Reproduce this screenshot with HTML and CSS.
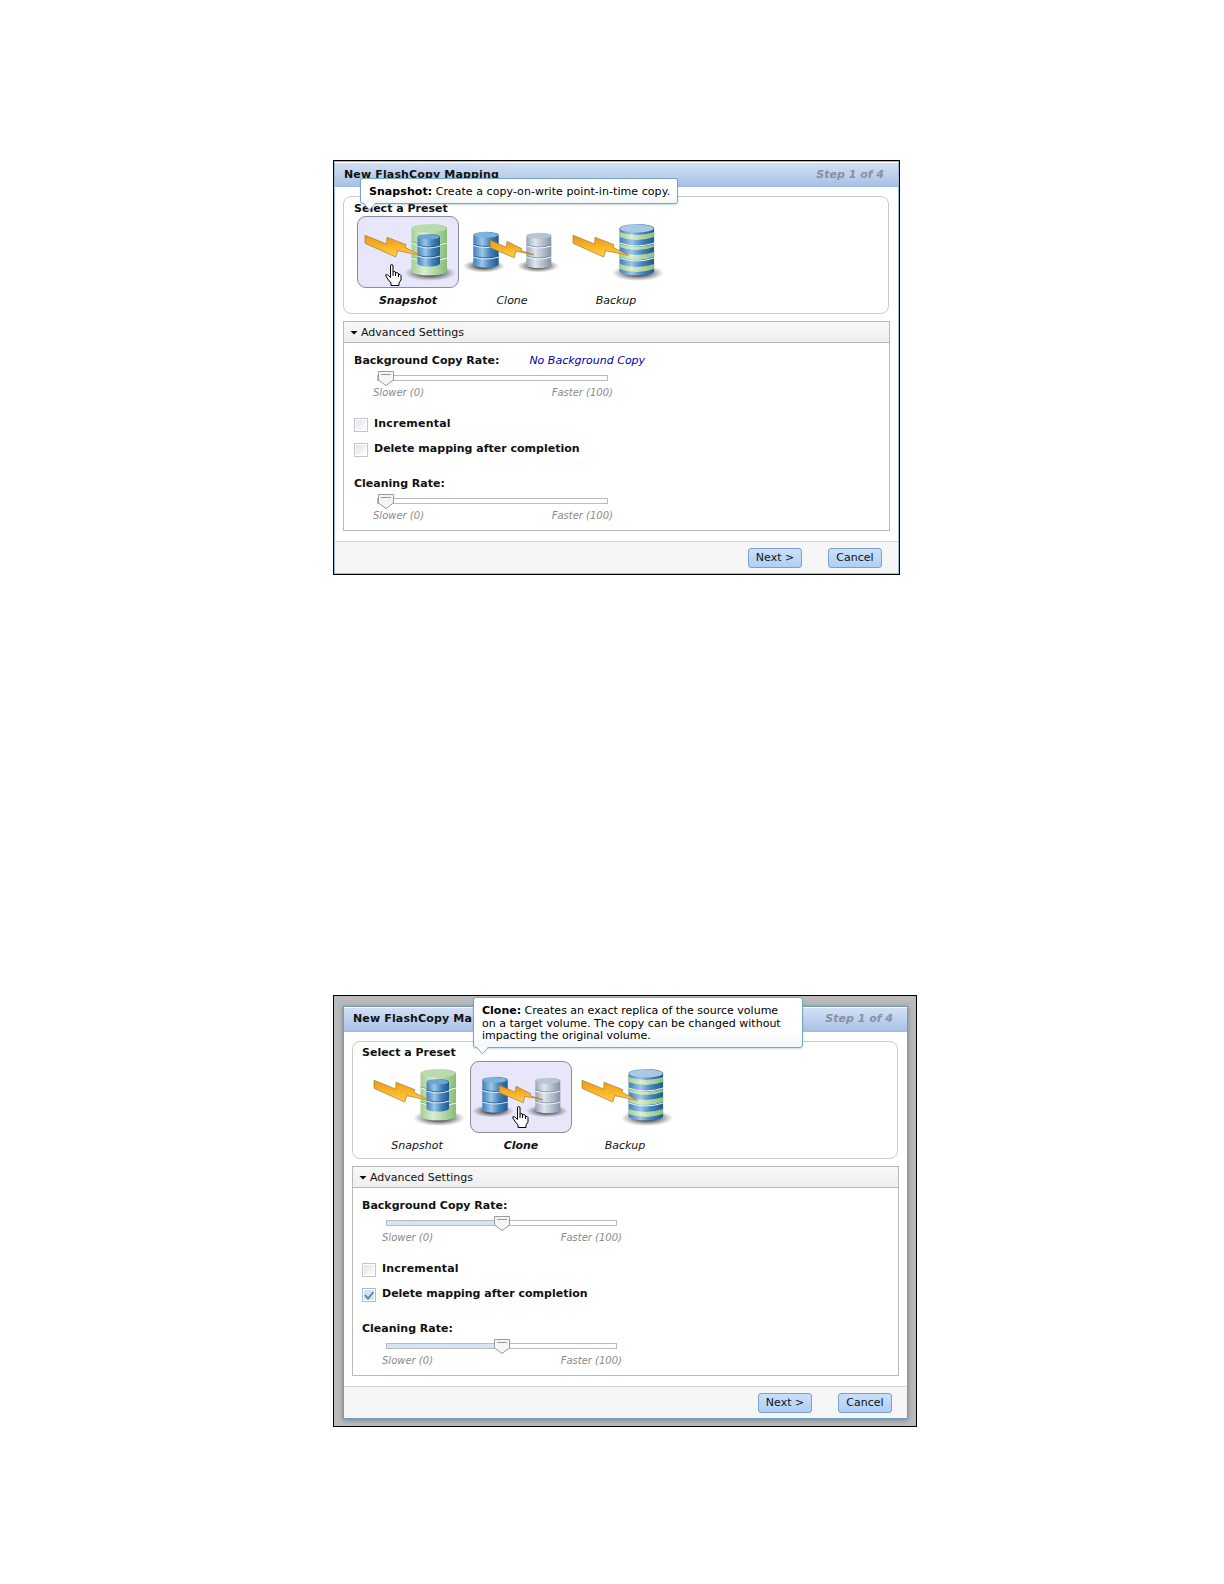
FILE: index.html
```html
<!DOCTYPE html>
<html lang="en">
<head>
	<meta charset="UTF-8">
	<title>New FlashCopy Mapping</title>
	<link rel="stylesheet" href="styles.css">
</head>
<body>
	<!-- shared drawings -->
	<svg class="defs" width="0" height="0">
		<defs>
			<linearGradient id="gGreen"><stop offset="0" stop-color="#a3cf92"/><stop offset=".35" stop-color="#daeecf"/><stop offset="1" stop-color="#86bd78"/></linearGradient>
			<linearGradient id="gBlue"><stop offset="0" stop-color="#3f7fb8"/><stop offset=".35" stop-color="#9cc6e8"/><stop offset=".65" stop-color="#4585bd"/><stop offset="1" stop-color="#22588f"/></linearGradient>
			<linearGradient id="gGrey"><stop offset="0" stop-color="#98a5b6"/><stop offset=".35" stop-color="#dfe5ec"/><stop offset="1" stop-color="#8593a8"/></linearGradient>
			<linearGradient id="gBolt" x2="0" y2="1"><stop offset="0" stop-color="#e8981c"/><stop offset=".6" stop-color="#fbb829"/><stop offset="1" stop-color="#ffd04a"/></linearGradient>
			<radialGradient id="gShade"><stop offset=".3" stop-color="#222" stop-opacity=".85"/><stop offset="1" stop-color="#555" stop-opacity="0"/></radialGradient>
			<symbol id="snapshot" viewBox="0 0 102 72">
				<ellipse cx="73" cy="57" rx="26" ry="8" fill="url(#gShade)"/>
				<path d="M54.500 12.500a17.700 4.500 0 0 1 35.500 0V55a17.700 4.500 0 0 1-35.500 0z" fill="url(#gGreen)"/>
				<ellipse cx="72.200" cy="12.500" rx="17" ry="4" fill="#b9dbae"/>
				<path d="M54.500 26q17.500 6 35.500 0M54.500 41q17.500 6 35.500 0" fill="none" stroke="#6fa965" stroke-width=".8"/>
				<path d="M54.500 27q17.500 6 35.500 0M54.500 42q17.500 6 35.500 0" fill="none" stroke="#f0f9ea"/>
				<path d="M60.500 21a11.200 3 0 0 1 22.500 0V47.500a11.200 3 0 0 1-22.500 0z" fill="url(#gBlue)"/>
				<ellipse cx="71.700" cy="21" rx="10.700" ry="2.600" fill="#6da5d2"/>
				<path d="M60.500 29q11 4 22.500 0M60.500 39q11 4 22.500 0" fill="none" stroke="#1f527f" stroke-width=".8"/>
				<path d="M60.500 30q11 4 22.500 0M60.500 40q11 4 22.500 0" fill="none" stroke="#dbeaf5"/>
				<path d="M8 19.300L29.700 28l.300-6.700 19 7.400-1 2.600 15.300 8-22.600-4.600-2 6.300L8 27.300z" fill="url(#gBolt)" stroke="#a8783a" stroke-width=".7"/>
			</symbol>
			<symbol id="clone" viewBox="0 0 102 72">
				<ellipse cx="23" cy="50" rx="21" ry="6.500" fill="url(#gShade)"/>
				<ellipse cx="77" cy="50" rx="21" ry="6.500" fill="url(#gShade)"/>
				<path d="M12.300 19a12.700 3.300 0 0 1 25.400 0V48.500a12.700 3.300 0 0 1-25.400 0z" fill="url(#gBlue)"/>
				<ellipse cx="25" cy="19" rx="12" ry="2.800" fill="#7fb1da"/>
				<path d="M12.300 28.500q12.700 4 25.400 0M12.300 40q12.700 4 25.400 0" fill="none" stroke="#1f527f" stroke-width=".8"/>
				<path d="M12.300 29.500q12.700 4 25.400 0M12.300 41q12.700 4 25.400 0" fill="none" stroke="#dbeaf5"/>
				<path d="M65.300 20a12.500 3.300 0 0 1 25 0V49a12.500 3.300 0 0 1-25 0z" fill="url(#gGrey)"/>
				<ellipse cx="77.800" cy="20" rx="12" ry="2.800" fill="#b9c4d2"/>
				<path d="M65.300 29q12.500 4 25 0M65.300 40q12.500 4 25 0" fill="none" stroke="#75859a" stroke-width=".8"/>
				<path d="M65.300 30q12.500 4 25 0M65.300 41q12.500 4 25 0" fill="none" stroke="#f3f6f9"/>
				<path d="M29 24l16.300 7.300.700-6 14.700 7.400-.700 2 13 4-18.300-3.400-1.400 6.400-24-10z" fill="url(#gBolt)" stroke="#a8783a" stroke-width=".7"/>
			</symbol>
			<symbol id="backup" viewBox="0 0 102 72">
				<ellipse cx="73" cy="57" rx="26" ry="8" fill="url(#gShade)"/>
				<path d="M54.500 12.500a17.300 4.500 0 0 1 34.600 0V55a17.300 4.500 0 0 1-34.600 0z" fill="url(#gBlue)"/>
				<path d="M54.500 16q17.300 6 34.600 0v5q-17.300 6-34.600 0zM54.500 28q17.300 6 34.600 0v3q-17.300 6-34.600 0zM54.500 36q17.300 6 34.600 0v5q-17.300 6-34.600 0zM54.500 48q17.300 6 34.600 0v5q-17.300 6-34.600 0z" fill="url(#gGreen)"/>
				<ellipse cx="71.800" cy="12.500" rx="16.800" ry="4" fill="#a8c8e4"/>
				<path d="M54.500 27q17.300 6 34.600 0M54.500 42q17.300 6 34.600 0" fill="none" stroke="#eaf3f8"/>
				<path d="M8 19.300L29.700 28l.300-6.700 19 7.400-1 2.600 15.300 8-22.600-4.600-2 6.300L8 27.300z" fill="url(#gBolt)" stroke="#a8783a" stroke-width=".7"/>
			</symbol>
			<symbol id="hand" viewBox="0 0 17 22">
				<path d="M5.500 13.500V2q0-1.500 1.200-1.500T8 2v6q1-1 2.500 0v1q1.500-1 3 .5v1q2-.5 2.500 1V16l-2 3v2.500H6V19l-2.500-3L.800 12q-.5-2 1.700-1.200z" fill="#fff" stroke="#000"/>
				<path d="M8 8v4M10.500 9v3M13.500 10v3" stroke="#000"/>
			</symbol>
			<symbol id="thumb" viewBox="0 0 16 15">
				<path d="M.5.500h15v8.500l-7.500 5.500L.5 9z" fill="#f5f5f7" stroke="#999ba0"/>
				<path d="M3 3.500h10" stroke="#999ba0"/>
			</symbol>
		</defs>
	</svg>

	<div class="frame">
		<div class="dialog">
			<div class="head"><b class="title">New FlashCopy Mapping</b><i class="step">Step 1 of 4</i></div>
			<div class="preset">
				<h3>Select a Preset</h3>
				<div class="tiles">
					<div class="tile current"><svg><use href="#snapshot"/></svg><span>Snapshot</span></div>
					<div class="tile"><svg><use href="#clone"/></svg><span>Clone</span></div>
					<div class="tile"><svg><use href="#backup"/></svg><span>Backup</span></div>
				</div>
			</div>
			<div class="advanced">
				<div class="bar"><i class="arrow"></i><span>Advanced Settings</span></div>
				<div class="rate"><b>Background Copy Rate:</b><em>No Background Copy</em></div>
				<div class="slider"><svg class="thumb"><use href="#thumb"/></svg></div>
				<div class="ends"><span>Slower (0)</span><span>Faster (100)</span></div>
				<div class="check"><i class="box"></i><b class="inc">Incremental</b></div>
				<div class="check"><i class="box"></i><b>Delete mapping after completion</b></div>
				<div class="rate clean"><b>Cleaning Rate:</b></div>
				<div class="slider"><svg class="thumb"><use href="#thumb"/></svg></div>
				<div class="ends"><span>Slower (0)</span><span>Faster (100)</span></div>
			</div>
			<div class="foot"><button>Next &gt;</button><button>Cancel</button></div>
			<div class="tip tip-snapshot"><b>Snapshot:</b> Create a copy-on-write point-in-time copy.<svg class="tail"><path d="M.5 0l6 7 6-7"/></svg></div>
			<svg class="hand hand-snapshot"><use href="#hand"/></svg>
		</div>
	</div>

	<div class="frame grey">
		<div class="dialog">
			<div class="head"><b class="title">New FlashCopy Ma</b><i class="step">Step 1 of 4</i></div>
			<div class="preset">
				<h3>Select a Preset</h3>
				<div class="tiles">
					<div class="tile"><svg><use href="#snapshot"/></svg><span>Snapshot</span></div>
					<div class="tile current"><svg><use href="#clone"/></svg><span>Clone</span></div>
					<div class="tile"><svg><use href="#backup"/></svg><span>Backup</span></div>
				</div>
			</div>
			<div class="advanced">
				<div class="bar"><i class="arrow"></i><span>Advanced Settings</span></div>
				<div class="rate"><b>Background Copy Rate:</b></div>
				<div class="slider half"><svg class="thumb"><use href="#thumb"/></svg></div>
				<div class="ends"><span>Slower (0)</span><span>Faster (100)</span></div>
				<div class="check"><i class="box"></i><b class="inc">Incremental</b></div>
				<div class="check"><i class="box on"><svg width="12" height="12"><path d="M2 6l3 3.500L10.500 3"/></svg></i><b>Delete mapping after completion</b></div>
				<div class="rate clean"><b>Cleaning Rate:</b></div>
				<div class="slider half"><svg class="thumb"><use href="#thumb"/></svg></div>
				<div class="ends"><span>Slower (0)</span><span>Faster (100)</span></div>
			</div>
			<div class="foot"><button>Next &gt;</button><button>Cancel</button></div>
			<div class="tip tip-clone"><b>Clone:</b> Creates an exact replica of the source volume<br>on a target volume. The copy can be changed without<br>impacting the original volume.<svg class="tail"><path d="M.5 0l6 7 6-7"/></svg></div>
			<svg class="hand hand-clone"><use href="#hand"/></svg>
		</div>
	</div>
</body>
</html>
```

FILE: styles.css
```css
*{
	box-sizing: border-box;
}
html,
body{
	margin: 0;
	padding: 0;
	background-color: #fff;
}
body{
	width: 1224px;
	height: 1584px;
	padding: 160px 0 0 333px;
	font: 11px/14px "DejaVu Sans", Verdana, sans-serif;
	color: #111;
}
svg{
	display: block;
}
.defs{
	position: absolute;
}
.frame{
	width: 567px;
	height: 415px;
	border: 1px solid #000;
}
.frame.grey{
	width: 584px;
	height: 432px;
	margin-top: 420px;
	padding: 10px 0 0 9px;
	background-color: #bbb;
}
.dialog{
	position: relative;
	width: 565px;
	height: 413px;
	display: flex;
	flex-direction: column;
	border: 1px solid #94bbd3;
	background-color: #fff;
}
.frame.grey .dialog{
	border-color: #6d9dc0;
	box-shadow: 0 1px 5px rgba(50, 70, 90, 0.5);
}
.head{
	height: 25px;
	display: flex;
	justify-content: space-between;
	padding: 5px 14px 0 9px;
	border-top: 1px solid #fff;
	border-bottom: 1px solid #9dbbe0;
	background: linear-gradient(#d3e0f4, #a9c1e6);
}
.frame.grey .head{
	padding-top: 4px;
}
.title{
	letter-spacing: 0.15px;
}
.step{
	font-weight: bold;
	color: #87919f;
}
.preset{
	width: 546px;
	height: 118px;
	margin: 9px 0 0 8px;
	padding: 5px 0 0 10px;
	border: 1px solid #ccc;
	border-radius: 8px;
}
.preset h3{
	margin: 0;
	height: 14px;
	font-size: 11px;
	line-height: 14px;
}
.frame.grey h3{
	line-height: 12px;
}
.tiles{
	display: flex;
	gap: 2px;
	padding-left: 3px;
}
.tile{
	width: 102px;
	text-align: center;
	font-style: italic;
}
.tile svg{
	width: 102px;
	height: 72px;
	margin-bottom: 6px;
	border-radius: 9px;
}
.tile.current{
	font-weight: bold;
}
.tile.current svg{
	background-color: #e7e7f9;
	outline: 1px solid #8c8c9c;
	outline-offset: -1px;
}
.advanced{
	width: 547px;
	height: 210px;
	margin: 7px 0 0 8px;
	border: 1px solid #b9b9b9;
}
.bar{
	height: 21px;
	display: flex;
	align-items: center;
	padding: 1px 0 0 6px;
	border-bottom: 1px solid #b9b9b9;
	background: linear-gradient(#f7f7f8, #efeff2);
}
.arrow{
	width: 8px;
	height: 4px;
	margin-right: 3px;
	background-color: #000;
	clip-path: polygon(0 0, 100% 0, 50% 100%);
}
.rate{
	height: 32px;
	display: flex;
	padding: 11px 0 0 10px;
}
.rate em{
	margin-left: 30px;
	color: #00a;
}
.slider{
	width: 231px;
	height: 6px;
	margin-left: 33px;
	border: 1px solid #b9bbbe;
	background-color: #fff;
}
.slider.half{
	background: linear-gradient(90deg, #d2e5f7 50%, #fff 50%);
}
.thumb{
	width: 16px;
	height: 15px;
	margin-top: -5px;
}
.slider.half .thumb{
	margin-left: 107px;
}
.ends{
	width: 240px;
	height: 36px;
	display: flex;
	justify-content: space-between;
	margin-left: 29px;
	padding-top: 5px;
	font-size: 10px;
	font-style: italic;
	color: #8a8a8a;
}
.check{
	height: 25px;
	display: flex;
	padding-left: 10px;
}
.inc{
	letter-spacing: 0.200px;
}
.box{
	width: 14px;
	height: 14px;
	margin: 1px 6px 0 0;
	border: 1px solid #c3c5c8;
	box-shadow: inset 0 0 0 1px #fff;
	background: linear-gradient(135deg, #dfe2e8, #fff);
}
.box.on{
	border-color: #a9bccb;
	background: #cfe4f3;
}
.box.on path{
	fill: none;
	stroke: #56819f;
	stroke-width: 1.800;
}
.rate.clean{
	height: 31px;
	padding-top: 10px;
}
.foot{
	flex: 1;
	margin-top: 10px;
	display: flex;
	align-items: flex-start;
	justify-content: flex-end;
	gap: 26px;
	padding: 6px 16px 0 0;
	border-top: 1px solid #d6d6d8;
	background-color: #f5f5f5;
}
.frame.grey .foot{
	padding-right: 15px;
}
.foot button{
	width: 54px;
	height: 20px;
	padding: 0 0 1px;
	border: 1px solid #7e9fc9;
	border-radius: 3px;
	font: inherit;
	color: #111;
	background: linear-gradient(#c9e0fb, #b0cff5);
}
.frame.grey .preset,
.frame.grey .rate,
.frame.grey .check{
	padding-left: 9px;
}
.frame.grey .tiles{
	padding-left: 4px;
}
/* overlays */
.tip{
	position: absolute;
	border: 1px solid #76a7c6;
	border-radius: 3px;
	background: linear-gradient(#fff 70%, #f1f7fa);
	white-space: nowrap;
	line-height: 12.500px;
	color: #000;
	box-shadow: 0 1px 2px rgba(80, 130, 160, 0.3);
}
.tip-snapshot{
	left: 25px;
	top: 16px;
	width: 318px;
	height: 26px;
	padding: 7px 8px;
	letter-spacing: 0.06px;
}
.tip-clone{
	left: 129px;
	top: -10px;
	width: 330px;
	height: 51px;
	padding: 7px 8px;
}
.tail{
	position: absolute;
	left: 2px;
	top: 100%;
	width: 13px;
	height: 8px;
}
.tail path{
	fill: #fff;
	stroke: #76a7c6;
}
.hand{
	position: absolute;
	width: 17px;
	height: 22px;
}
.hand-snapshot{
	left: 50px;
	top: 102px;
}
.hand-clone{
	left: 168px;
	top: 99px;
}
```
